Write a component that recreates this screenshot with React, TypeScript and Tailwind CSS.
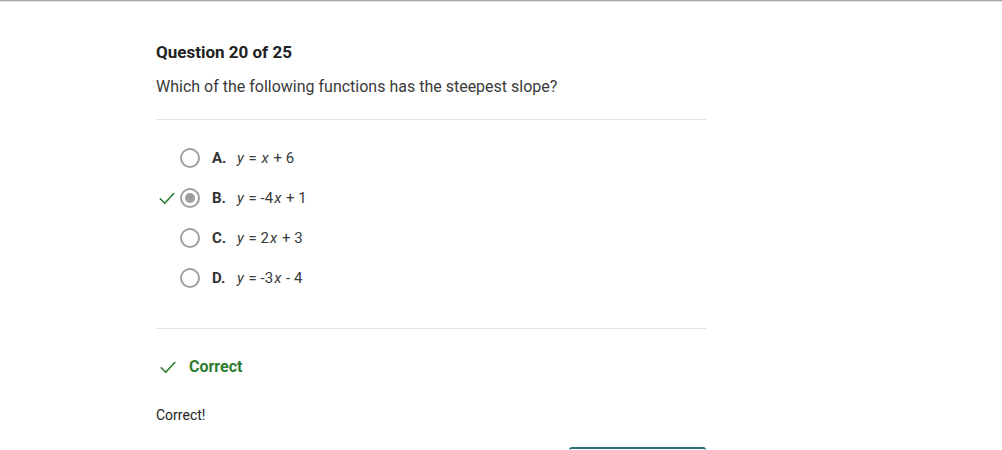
import React from "react";

const OPTIONS = [
  { letter: "A.", rest: " = x + 6", correct: false },
  { letter: "B.", rest: " = -4x + 1", correct: true },
  { letter: "C.", rest: " = 2x + 3", correct: false },
  { letter: "D.", rest: " = -3x - 4", correct: false },
];

function Check({ className }: { className?: string }) {
  return (
    <svg viewBox="0 0 24 24" className={className} fill="none" stroke="currentColor" strokeWidth="2.2" strokeLinecap="round" strokeLinejoin="round">
      <path d="M3 13 L9 19 L21 6" />
    </svg>
  );
}

// renders e.g. "y = -4x + 1" with italic variables
function Formula({ text }: { text: string }) {
  const parts = ("y" + text).split(/(x|y)/);
  return (
    <span className="text-[15px] text-[#3a3a3a]">
      {parts.map((p, i) =>
        p === "x" || p === "y" ? (
          <i key={i} className="px-[1px]">{p}</i>
        ) : (
          <span key={i}>{p}</span>
        )
      )}
    </span>
  );
}

export default function App() {
  return (
    <div className="h-[450px] w-[1002px] overflow-hidden bg-white font-['Roboto',sans-serif]">
      <div className="h-px bg-[#a3a3a3]" />
      <div className="h-px bg-[#e6e6e6]" />
      <div className="ml-[156px] w-[550px] pt-[38px]">
        <h1 className="text-[17px] font-bold leading-6 text-[#222]">Question 20 of 25</h1>
        <p className="mt-[13px] text-[16px] leading-5 text-[#3a3a3a]">Which of the following functions has the steepest slope?</p>
        <div className="mt-[22px] h-px bg-[#e2e2e2]" />

        <div className="flex flex-col gap-[20px] pt-[28px] pb-[40px]">
          {OPTIONS.map((o) => (
            <div key={o.letter} className="flex h-5 items-center">
              <div className="flex w-6 items-center justify-start">
                {o.correct && <Check className="ml-[2px] h-[18px] w-[18px] text-[#2e7d32]" />}
              </div>
              <div className="flex h-5 w-5 items-center justify-center rounded-full border-2 border-[#9e9e9e]">
                {o.correct && <div className="h-[10px] w-[10px] rounded-full bg-[#9e9e9e]" />}
              </div>
              <span className="ml-[12px] w-[24px] text-[15px] font-bold text-[#333]">{o.letter}</span>
              <Formula text={o.rest} />
            </div>
          ))}
        </div>

        <div className="h-px bg-[#e2e2e2]" />

        <div className="mt-[26px] flex items-center gap-[12px] pl-[3px]">
          <Check className="h-[18px] w-[18px] text-[#2e7d32]" />
          <span className="text-[16px] font-bold text-[#2e7d32]">Correct</span>
        </div>

        <p className="mt-[26px] text-[14px] text-[#222]">Correct!</p>

        <div className="mt-[21px] flex justify-end">
          <div className="h-8 w-[137px] rounded-t-[3px] border-t-2 border-[#2f6f73] bg-[#f4fbfb]" />
        </div>
      </div>
    </div>
  );
}
